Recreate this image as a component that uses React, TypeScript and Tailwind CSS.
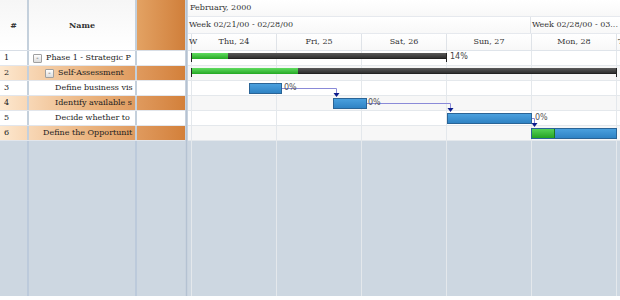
import React from 'react';

const rows = [
  { id: 1, name: 'Phase 1 - Strategic P', pad: 'pl-[4px]', expander: true },
  { id: 2, name: 'Self-Assessment', pad: 'pl-[16px]', expander: true },
  { id: 3, name: 'Define business vis', pad: 'pl-[26px]', expander: false },
  { id: 4, name: 'Identify available s', pad: 'pl-[26px]', expander: false },
  { id: 5, name: 'Decide whether to', pad: 'pl-[26px]', expander: false },
  { id: 6, name: 'Define the Opportunit', pad: 'pl-[14px]', expander: false },
];

const days = ['Thu, 24', 'Fri, 25', 'Sat, 26', 'Sun, 27', 'Mon, 28'];

const Expander = () => (
  <span className="inline-flex items-center justify-center w-[9px] h-[9px] mr-[4px] border border-[#a0a0a0] bg-gradient-to-b from-white to-[#dcdcdc] rounded-[1px] text-[7px] leading-none text-[#444]">
    -
  </span>
);

// day grid columns behind the body rows
const DayColumns = () => (
  <div className="flex h-full">
    <div className="w-[4px] shrink-0 border-r border-[#e4e8ec]" />
    {days.map((d) => (
      <div key={d} className="w-[85px] shrink-0 border-r border-[#e4e8ec]" />
    ))}
    <div className="flex-1" />
  </div>
);

const SummaryBar = ({ left, width, done, top }: { left: number; width: number; done: number; top: number }) => (
  <div className="absolute h-[6px]" style={{ left, width, top }}>
    <div className="absolute inset-0 bg-gradient-to-b from-[#5a5a5a] to-[#303030] border-b border-[#222]" />
    <div className="absolute left-0 top-0 h-full bg-gradient-to-b from-[#5fdc5f] to-[#22a822]" style={{ width: done }} />
    <div className="absolute left-0 top-0 w-[1px] h-[9px] bg-[#222]" />
    <div className="absolute right-0 top-0 w-[1px] h-[9px] bg-[#222]" />
  </div>
);

const TaskBar = ({ left, width, done = 0, top }: { left: number; width: number; done?: number; top: number }) => (
  <div
    className="absolute h-[11px] border border-[#2a6496] bg-gradient-to-b from-[#4aa0de] to-[#2f83c4] overflow-hidden"
    style={{ left, width, top }}
  >
    {done > 0 && (
      <div className="h-full bg-gradient-to-b from-[#55d255] to-[#22a322] border-r border-[#1b7a1b]" style={{ width: done }} />
    )}
  </div>
);

export default function App() {
  return (
    <div className="w-[620px] h-[300px] bg-white flex flex-col" style={{ fontFamily: '"DejaVu Serif", serif' }}>
      <div className="h-[296px] flex overflow-hidden">
        {/* left grid */}
        <div className="w-[185px] shrink-0 flex flex-col bg-[#cdd7e1]">
          <div className="h-[51px] flex border-b border-[#d8dee6]">
            <div className="w-[29px] border-r-2 border-[#c4d0dc] bg-gradient-to-b from-[#f6f6f6] to-white flex items-center justify-center text-[8px] font-bold text-[#333]">#</div>
            <div className="w-[108px] border-r-2 border-[#c4d0dc] bg-gradient-to-b from-[#f6f6f6] to-white flex items-center justify-center text-[8px] font-bold text-[#333]">Name</div>
            <div className="flex-1 bg-gradient-to-r from-[#e3a263] to-[#d07f3a]" />
          </div>
          {rows.map((r) => (
            <div
              key={r.id}
              className={`h-[15px] flex border-b border-[#e2e6ec] text-[8px] text-[#222] ${
                r.id % 2 === 0 ? 'bg-gradient-to-r from-[#fde8cf] via-[#eab27c] to-[#d3803a]' : 'bg-white'
              }`}
            >
              <div className="w-[29px] border-r-2 border-[#c4d0dc] pl-[4px] flex items-center">{r.id}</div>
              <div className={`w-[108px] border-r-2 border-[#c4d0dc] ${r.pad} flex items-center whitespace-nowrap overflow-hidden`}>
                {r.expander && <Expander />}
                {r.name}
              </div>
              <div className="flex-1" />
            </div>
          ))}
          <div className="flex-1 flex">
            <div className="w-[29px] border-r-2 border-[#bccadb]" />
            <div className="w-[108px] border-r-2 border-[#bccadb]" />
          </div>
        </div>
        {/* splitter */}
        <div className="w-[3px] shrink-0 bg-[#b4c2d2] border-x border-[#c8d2de]" />
        {/* chart */}
        <div className="flex-1 flex flex-col overflow-hidden bg-[#cdd7e1]">
          <div className="h-[51px] bg-white flex flex-col text-[8px] text-[#333] border-b border-[#dfe4ea] whitespace-nowrap">
            <div className="h-[17px] flex items-center pl-[2px] border-b border-[#e6e9ee] bg-gradient-to-b from-white to-[#f8f8f8]">February, 2000</div>
            <div className="h-[17px] flex border-b border-[#e6e9ee] bg-gradient-to-b from-white to-[#f8f8f8]">
              <div className="w-[343px] shrink-0 flex items-center pl-[1px] border-r border-[#dfe3e8]">Week 02/21/00 - 02/28/00</div>
              <div className="flex-1 flex items-center pl-[1px]">Week 02/28/00 - 03...</div>
            </div>
            <div className="flex-1 flex bg-gradient-to-b from-white to-[#f8f8f8]">
              <div className="w-[4px] shrink-0 border-r border-[#dfe3e8] flex items-center overflow-visible">
                <span className="pl-[1px]">W</span>
              </div>
              {days.map((d) => (
                <div key={d} className="w-[85px] shrink-0 border-r border-[#dfe3e8] flex items-center justify-center">
                  {d}
                </div>
              ))}
              <div className="flex-1 flex items-center pl-[1px]">T</div>
            </div>
          </div>
          <div className="relative">
            <div className="flex flex-col">
              {rows.map((r) => (
                <div key={r.id} className={`h-[15px] border-b border-[#e4e8ec] ${r.id % 2 === 0 ? 'bg-[#f7f7f7]' : 'bg-white'}`} />
              ))}
            </div>
            <div className="absolute inset-0">
              <DayColumns />
            </div>
            {/* links */}
            <svg className="absolute left-0 top-0" width="432" height="92">
              <g stroke="#8a8ad8" strokeWidth="1" fill="none">
                <path d="M93 37.5 H148.5 V43" />
                <path d="M178 52.5 H262.5 V58" />
                <path d="M343 67.5 H346.5 V73" />
              </g>
              <g fill="#0b1c8c">
                <path d="M145.5 42 L151.5 42 L148.5 46 Z" />
                <path d="M259.5 57 L265.5 57 L262.5 61 Z" />
                <path d="M343.5 72 L349.5 72 L346.5 76 Z" />
              </g>
            </svg>
            <SummaryBar left={3} width={256} done={37} top={2} />
            <SummaryBar left={3} width={426} done={107} top={17} />
            <TaskBar left={61} width={33} top={32} />
            <TaskBar left={145} width={34} top={47} />
            <TaskBar left={259} width={85} top={62} />
            <TaskBar left={343} width={86} done={23} top={77} />
            <div className="absolute text-[8px] leading-none text-[#444] whitespace-nowrap" style={{ left: 262, top: 2, fontFamily: '"DejaVu Sans", sans-serif' }}>14%</div>
            <div className="absolute text-[8px] leading-none text-[#555] whitespace-nowrap" style={{ left: 96, top: 33, fontFamily: '"DejaVu Sans", sans-serif' }}>0%</div>
            <div className="absolute text-[8px] leading-none text-[#555] whitespace-nowrap" style={{ left: 180, top: 48, fontFamily: '"DejaVu Sans", sans-serif' }}>0%</div>
            <div className="absolute text-[8px] leading-none text-[#555] whitespace-nowrap" style={{ left: 347, top: 63, fontFamily: '"DejaVu Sans", sans-serif' }}>0%</div>
          </div>
          <div className="flex-1 relative">
            <div className="absolute inset-0">
              <DayColumns />
            </div>
          </div>
        </div>
      </div>
    </div>
  );
}
